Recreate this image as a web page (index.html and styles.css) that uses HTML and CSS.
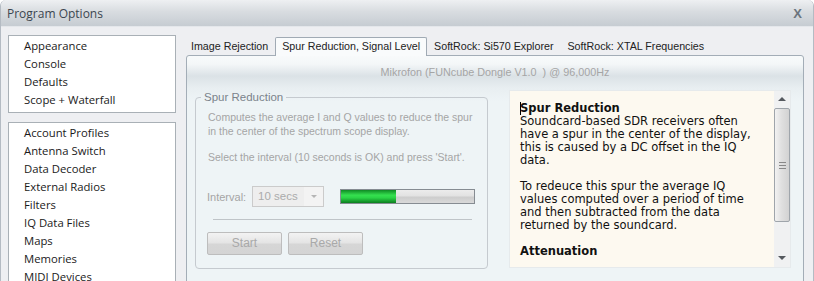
FILE: index.html
```html
<!DOCTYPE html>
<html lang="en">
<head>
    <meta charset="UTF-8">
    <title>Program Options</title>
    <link rel="stylesheet" href="styles.css">
</head>
<body>
    <div class="window">
        <div class="titlebar">
            <span>Program Options</span>
            <span class="close">X</span>
        </div>
        <div class="main">
            <div class="nav">
                <div class="listbox">
                    <div>Appearance</div>
                    <div>Console</div>
                    <div>Defaults</div>
                    <div>Scope + Waterfall</div>
                </div>
                <div class="listbox">
                    <div>Account Profiles</div>
                    <div>Antenna Switch</div>
                    <div>Data Decoder</div>
                    <div>External Radios</div>
                    <div>Filters</div>
                    <div>IQ Data Files</div>
                    <div>Maps</div>
                    <div>Memories</div>
                    <div>MIDI Devices</div>
                </div>
            </div>

            <div class="tabs-area">
                <div class="tabstrip">
                    <div class="tab first">Image Rejection</div>
                    <div class="tab active">Spur Reduction, Signal Level</div>
                    <div class="tab">SoftRock: Si570 Explorer</div>
                    <div class="tab">SoftRock: XTAL Frequencies</div>
                </div>
                <div class="panel">
                    <div class="device">Mikrofon (FUNcube Dongle V1.0&nbsp; ) @ 96,000Hz</div>
                    <div class="content">
                        <fieldset class="group">
                            <legend>Spur Reduction</legend>
                            <p class="first-p">Computes the average I and Q values to reduce the spur<br>in the center of the spectrum scope display.</p>
                            <p>Select the interval (10 seconds is OK) and press 'Start'.</p>
                            <div class="interval-row">
                                <span class="label">Interval:</span>
                                <div class="combo">
                                    <span class="combo-text">10 secs</span>
                                    <span class="combo-btn"><span class="arrow-down small"></span></span>
                                </div>
                                <div class="progress">
                                    <div class="progress-fill" style="width: 41%"></div>
                                </div>
                            </div>
                            <div class="separator"></div>
                            <div class="buttons">
                                <div class="btn">Start</div>
                                <div class="btn">Reset</div>
                            </div>
                        </fieldset>

                        <div class="help">
                            <div class="help-text">
                                <div class="help-title"><span class="caret"></span>Spur Reduction</div>
                                <div>Soundcard-based SDR receivers often<br>have a spur in the center of the display,<br>this is caused by a DC offset in the IQ<br>data.</div>
                                <div class="help-para">To redeuce this spur the average IQ<br>values computed over a period of time<br>and then subtracted from the data<br>returned by the soundcard.</div>
                                <div class="help-title help-para">Attenuation</div>
                            </div>
                            <div class="scrollbar">
                                <div class="sb-btn"><span class="arrow-up"></span></div>
                                <div class="thumb">
                                    <div class="grip"></div>
                                </div>
                                <div class="sb-btn bottom"><span class="arrow-down"></span></div>
                            </div>
                        </div>
                    </div>
                </div>
            </div>
        </div>
    </div>
</body>
</html>
```

FILE: styles.css
```css
body {
    margin: 0;
    background: #fff;
    font-family: "Liberation Sans", Arial, sans-serif;
}
.window {
    width: 812px;
    height: 281px;
    border-left: 1px solid #b4bbc3;
    border-right: 1px solid #b4bbc3;
    border-radius: 6px 6px 0 0;
    background: #eeeff2;
    overflow: hidden;
}
.titlebar {
    height: 26px;
    border-bottom: 1px solid #e4e7eb;
    background: linear-gradient(#eef0f2, #d8dce0 45%, #c6ccd2);
    display: flex;
    align-items: center;
    justify-content: space-between;
    padding: 0 11px 0 6px;
    font-family: "Open Sans", sans-serif;
    font-size: 12px;
    color: #3c4650;
}
.close {
    font-family: "Liberation Sans", Arial, sans-serif;
    font-weight: bold;
    font-size: 13px;
    color: #6b747d;
}

.main {
    display: flex;
    gap: 10px;
    padding: 8px 0 0 7px;
}
.nav {
    width: 168px;
    flex: none;
    display: flex;
    flex-direction: column;
    gap: 9px;
}
.listbox {
    background: #fff;
    border: 1px solid #a9b0b6;
    padding: 1px 0 3px;
    font-family: "Open Sans", sans-serif;
    font-size: 11.3px;
    line-height: 18px;
    color: #1a1a1a;
}
.listbox div {
    padding-left: 15px;
}

/* Tabs */
.tabs-area {
    width: 618px;
    flex: none;
    padding-top: 2px;
}
.tabstrip {
    display: flex;
    height: 18px;
    font-size: 10.7px;
    color: #222;
}
.tab {
    box-sizing: border-box;
    height: 18px;
    padding: 0 6px;
    line-height: 17px;
    border: 1px solid transparent;
    border-bottom: none;
}
.tab.first {
    padding-left: 4px;
}
.tab.active {
    position: relative;
    height: 19px;
    background: #f9fbfc;
    border-color: #a0aab4;
    border-radius: 2px 2px 0 0;
}
.panel {
    height: 240px;
    border: 1px solid #a3adb7;
    border-radius: 3px 3px 0 0;
    background: linear-gradient(#f8fafb 0, #f4f7f8 8px, #dbe2e6 20px, #e8eef1 32px, #eef4f6 45px);
}
.device {
    padding-top: 9px;
    line-height: 14px;
    font-size: 10.8px;
    color: #a5a5a5;
    text-align: center;
}
.content {
    display: flex;
    gap: 21px;
    padding: 11px 12px 0 8px;
}

/* Group box */
.group {
    box-sizing: border-box;
    width: 292px;
    height: 179px;
    margin: 0;
    padding: 0 12px;
    border: 1px solid #c5cacf;
    border-radius: 4px;
    font-size: 10.5px;
    color: #a5a5a5;
    white-space: nowrap;
}
.group legend {
    padding: 0 3px;
    margin-left: -7px;
    line-height: 14px;
    font-size: 11.5px;
    color: #7b838b;
}
.group p {
    margin: 12px 0 0;
    line-height: 14px;
}
.group p.first-p {
    margin-top: 6px;
}
.interval-row {
    display: flex;
    align-items: center;
    margin: 22px 0 0 -1px;
    height: 21px;
}
.label {
    width: 45px;
    flex: none;
    font-size: 11px;
}
.combo {
    box-sizing: border-box;
    width: 72px;
    height: 21px;
    display: flex;
    border: 1px solid #cbcbcb;
    background: #eeeeee;
}
.combo-text {
    flex: 1;
    padding-left: 5px;
    line-height: 19px;
    font-size: 11.5px;
    color: #ababab;
}
.combo-btn {
    width: 19px;
    display: flex;
    align-items: center;
    justify-content: center;
    background: #f3f3f3;
}
.progress {
    box-sizing: border-box;
    width: 135px;
    height: 15px;
    margin-left: 16px;
    border: 1px solid #868c92;
    background: linear-gradient(#ececec, #e2e2e2 45%, #cdcdcd 55%, #d9d9d9);
}
.progress-fill {
    height: 100%;
    background: linear-gradient(#0f8a24, #35e04f 40%, #2bd446 60%, #0c7d1f);
}
.separator {
    margin: 12px 3px 0 5px;
    border-top: 1px solid #bfc4c8;
}
.buttons {
    display: flex;
    gap: 6px;
    margin: 12px 0 0 -1px;
}
.btn {
    box-sizing: border-box;
    width: 75px;
    height: 23px;
    border: 1px solid #bdbdbd;
    border-radius: 2px;
    background: linear-gradient(#f3f3f3, #e4e4e4 48%, #d6d6d6 52%, #d4d4d4);
    color: #a9a9a9;
    font-size: 12px;
    line-height: 21px;
    text-align: center;
}

/* Help box */
.help {
    box-sizing: border-box;
    width: 285px;
    height: 178px;
    display: flex;
    background: #fdf9f0;
    border: 1px solid #e6eaec;
}
.help-text {
    flex: 1;
    padding: 11px 0 0 10px;
    overflow: hidden;
    white-space: nowrap;
    font-family: "DejaVu Sans", Verdana, sans-serif;
    font-size: 11.5px;
    line-height: 13px;
    color: #111;
}
.help-title {
    font-weight: bold;
}
.help-para {
    margin-top: 13px;
}
.caret {
    display: inline-block;
    width: 1px;
    height: 13px;
    margin-right: -1px;
    vertical-align: top;
    background: #000;
}
.scrollbar {
    width: 16px;
    flex: none;
    display: flex;
    flex-direction: column;
    background: #f0f1f2;
}
.sb-btn {
    height: 16px;
    display: flex;
    align-items: center;
    justify-content: center;
}
.sb-btn.bottom {
    margin-top: auto;
    margin-bottom: 1px;
}
.arrow-up {
    width: 0;
    height: 0;
    border-left: 4px solid transparent;
    border-right: 4px solid transparent;
    border-bottom: 4px solid #55595e;
}
.arrow-down {
    width: 0;
    height: 0;
    border-left: 4px solid transparent;
    border-right: 4px solid transparent;
    border-top: 4px solid #55595e;
}
.arrow-down.small {
    border-left-width: 3px;
    border-right-width: 3px;
    border-top: 3px solid #b5b5b5;
}
.thumb {
    box-sizing: border-box;
    height: 114px;
    margin: 1px 0 0;
    border: 1px solid #9fa5ab;
    border-radius: 2px;
    background: linear-gradient(90deg, #f2f2f2, #e0e0e0 45%, #d2d2d2);
    display: flex;
    align-items: center;
    justify-content: center;
}
.grip {
    width: 7px;
    height: 5px;
    border-top: 1px solid #888;
    border-bottom: 1px solid #888;
    background: linear-gradient(transparent 2px, #888 2px, #888 3px, transparent 3px);
}
```
